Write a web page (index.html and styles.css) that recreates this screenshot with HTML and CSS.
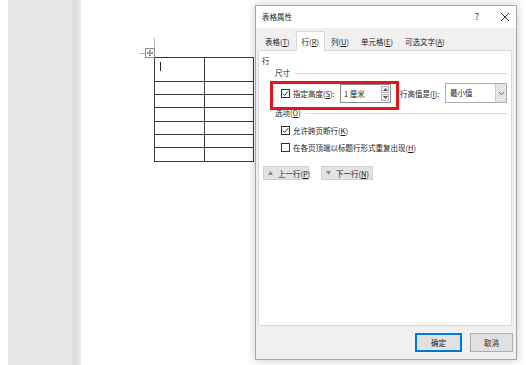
FILE: index.html
```html
<!DOCTYPE html>
<html lang="zh-CN">
<head>
<meta charset="utf-8">
<title>表格属性</title>
<link rel="stylesheet" href="styles.css">
</head>
<body>
<div class="screen">
  <div class="edge"></div>
  <div class="gutter"></div>
  <div class="gutter-shade"></div>
  <div class="page">
    <div class="crop-v"></div>
    <div class="crop-h"></div>
    <div class="handle">
      <svg width="8" height="8" viewBox="0 0 8 8"><path d="M4 1.2V6.8M1.2 4H6.8" stroke="#555" stroke-width="0.8" fill="none"/><path d="M4 0.8L3 2H5Z M4 7.2L3 6H5Z M0.8 4L2 3V5Z M7.2 4L6 3V5Z" fill="#555"/></svg>
    </div>
    <table class="doc-table">
      <tr class="r1"><td><span class="caret"></span></td><td></td></tr>
      <tr class="r2"><td></td><td></td></tr>
      <tr class="r2"><td></td><td></td></tr>
      <tr class="r3"><td></td><td></td></tr>
      <tr class="r2"><td></td><td></td></tr>
      <tr class="r2"><td></td><td></td></tr>
      <tr class="r3"><td></td><td></td></tr>
    </table>
  </div>
</div>

<div class="dialog">
  <div class="titlebar">
    <span class="title">表格属性</span>
    <span class="help">?</span>
    <span class="close"><svg width="10" height="10" viewBox="0 0 10 10"><path d="M1 1L9 9M9 1L1 9" stroke="#333" stroke-width="1" fill="none"/></svg></span>
  </div>
  <div class="tabs">
    <div class="tab">表格(<u>T</u>)</div>
    <div class="tab active">行(<u>R</u>)</div>
    <div class="tab">列(<u>U</u>)</div>
    <div class="tab">单元格(<u>E</u>)</div>
    <div class="tab">可选文字(<u>A</u>)</div>
  </div>
  <div class="panel">
    <div class="section-title">行</div>
    <div class="group-head"><span>尺寸</span><i class="rule"></i></div>
    <div class="size-row">
      <span class="check"><svg width="7" height="7" viewBox="0 0 7 7"><path d="M0.8 3.6L2.6 5.4L6.2 1.2" stroke="#222" stroke-width="0.9" fill="none"/></svg></span>
      <span class="lbl">指定高度(<u>S</u>):</span>
      <div class="spin">
        <span class="spin-val">1 厘米</span>
        <div class="spin-btns">
          <span class="spin-btn"><svg width="5" height="3" viewBox="0 0 5 3"><path d="M2.5 0L5 3H0Z" fill="#555"/></svg></span>
          <span class="spin-btn"><svg width="5" height="3" viewBox="0 0 5 3"><path d="M0 0H5L2.5 3Z" fill="#555"/></svg></span>
        </div>
      </div>
      <span class="lbl2">行高值是(<u>I</u>):</span>
      <div class="select">
        <span class="select-val">最小值</span>
        <span class="drop"><svg width="7" height="5" viewBox="0 0 7 5"><path d="M1 1.2L3.5 3.6L6 1.2" stroke="#555" stroke-width="0.9" fill="none"/></svg></span>
      </div>
    </div>
    <div class="group-head group-gap"><span>选项(<u>O</u>)</span><i class="rule"></i></div>
    <div class="opt-row">
      <span class="check"><svg width="7" height="7" viewBox="0 0 7 7"><path d="M0.8 3.6L2.6 5.4L6.2 1.2" stroke="#222" stroke-width="0.9" fill="none"/></svg></span>
      <span class="opt-text">允许跨页断行(<u>K</u>)</span>
    </div>
    <div class="opt-row second">
      <span class="check"></span>
      <span class="opt-text">在各页顶端以标题行形式重复出现(<u>H</u>)</span>
    </div>
    <div class="nav-row">
      <button class="nav-btn prev"><svg class="arrow" width="5" height="4" viewBox="0 0 5 4"><path d="M2.5 0L5 4H0Z" fill="#8a8a8a"/></svg>上一行(<u>P</u>)</button>
      <button class="nav-btn next"><svg class="arrow" width="5" height="4" viewBox="0 0 5 4"><path d="M0 0H5L2.5 4Z" fill="#8a8a8a"/></svg>下一行(<u>N</u>)</button>
    </div>
    <div class="highlight"></div>
  </div>
  <div class="footer">
    <button class="btn ok">确定</button>
    <button class="btn cancel">取消</button>
  </div>
</div>
</body>
</html>
```

FILE: styles.css
```css
html, body {
  margin: 0;
  padding: 0;
}
body {
  width: 527px;
  height: 365px;
  overflow: hidden;
  position: relative;
  background: #fff;
  font-family: "Noto Sans CJK SC", "Noto Sans", sans-serif;
}
u {
  text-decoration: underline;
  text-underline-offset: 1px;
  text-decoration-thickness: 0.5px;
}

/* ---------- document background ---------- */
.screen {
  display: flex;
  height: 365px;
}
.edge {
  width: 8px;
  background: #fff;
}
.gutter {
  width: 64px;
  background: #e6e6e6;
}
.gutter-shade {
  width: 9px;
  background: linear-gradient(to right, #dcdcdc, #e0e0e0 60%, #f0f0f0);
}
.page {
  flex: 1;
  position: relative;
  background: #fff;
  padding: 57px 0 0 73px;
}
.crop-v {
  position: absolute;
  left: 73px;
  top: 38px;
  width: 1px;
  height: 15px;
  background: #b0b0b0;
}
.crop-h {
  position: absolute;
  left: 59px;
  top: 53px;
  width: 14px;
  height: 1px;
  background: #b0b0b0;
}
.handle {
  position: absolute;
  left: 64px;
  top: 48px;
  width: 8px;
  height: 8px;
  border: 1px solid #8c8c8c;
  background: #fff;
  display: flex;
}
.doc-table {
  border-collapse: collapse;
  width: 100px;
  table-layout: fixed;
}
.doc-table td {
  border: 1px solid #3a3a3a;
  padding: 0;
  vertical-align: top;
}
.doc-table .r1 { height: 24px; }
.doc-table .r2 { height: 13px; }
.doc-table .r3 { height: 14px; }
.caret {
  display: block;
  width: 1px;
  height: 9px;
  margin: 4px 0 0 5px;
  background: #222;
}

/* ---------- dialog ---------- */
.dialog {
  position: absolute;
  left: 255px;
  top: 5px;
  width: 262px;
  height: 355px;
  box-sizing: border-box;
  border: 1px solid #a6a6a6;
  background: #f0f0f0;
  box-shadow: 0 0 9px rgba(0, 0, 0, 0.22);
  display: flex;
  flex-direction: column;
  font-size: 7.5px;
  color: #1a1a1a;
}
.titlebar {
  height: 22px;
  background: #fff;
  display: flex;
  align-items: center;
  padding-left: 6px;
  line-height: 12px;
}
.title {
  flex: 1;
}
.help {
  width: 10px;
  text-align: center;
  font-size: 9px;
  color: #333;
  margin-right: 18px;
}
.close {
  width: 10px;
  height: 10px;
  display: flex;
  margin-right: 6px;
}
.tabs {
  height: 22px;
  display: flex;
  align-items: flex-end;
  padding-left: 3px;
}
.tab {
  height: 16px;
  line-height: 15px;
  padding: 0 6px;
  white-space: nowrap;
}
.tab.active {
  height: 19px;
  line-height: 19px;
  padding: 0 5px;
  background: #fff;
  border: 1px solid #d9d9d9;
  border-bottom: none;
  margin-bottom: -1px;
  position: relative;
  z-index: 1;
}
.panel {
  position: relative;
  height: 276px;
  margin: 0 4px 0 2px;
  box-sizing: border-box;
  background: #fff;
  border: 1px solid #d9d9d9;
  padding: 4px 3px 0 3px;
}
.section-title {
  line-height: 12px;
}
.group-head {
  display: flex;
  align-items: center;
  margin-left: 13px;
  line-height: 12px;
  white-space: nowrap;
}
.group-head.group-gap {
  margin-top: 4px;
}
.rule {
  flex: 1;
  height: 1px;
  background: #dcdcdc;
  margin-left: 4px;
}
.size-row {
  margin-top: 4px;
  height: 20px;
  display: flex;
  align-items: center;
  padding-left: 19px;
  white-space: nowrap;
}
.check {
  width: 9px;
  height: 9px;
  box-sizing: border-box;
  border: 1px solid #333;
  background: #fff;
  display: flex;
  align-items: center;
  justify-content: center;
  flex: none;
}
.lbl {
  margin-left: 3px;
  width: 45px;
}
.spin {
  margin-left: 2px;
  width: 51px;
  height: 19px;
  box-sizing: border-box;
  border: 1px solid #8a8a8a;
  background: #fff;
  display: flex;
  align-items: stretch;
}
.spin-val {
  flex: 1;
  padding-left: 3px;
  line-height: 17px;
}
.spin-btns {
  width: 8px;
  margin: 1px 1px 1px 0;
  display: flex;
  flex-direction: column;
  gap: 1px;
}
.spin-btn {
  flex: 1;
  border: 1px solid #b4b4b4;
  background: #f4f4f4;
  display: flex;
  align-items: center;
  justify-content: center;
}
.lbl2 {
  margin-left: 9px;
  width: 44px;
}
.select {
  margin-left: 1px;
  width: 62px;
  height: 20px;
  box-sizing: border-box;
  border: 1px solid #acacac;
  background: #fff;
  display: flex;
  align-items: stretch;
}
.select-val {
  flex: 1;
  padding-left: 4px;
  line-height: 18px;
}
.drop {
  width: 10px;
  background: #e5e5e5;
  border-left: 1px solid #c9c9c9;
  display: flex;
  align-items: center;
  justify-content: center;
}
.opt-row {
  margin-top: 4px;
  height: 14px;
  display: flex;
  align-items: center;
  padding-left: 19px;
  white-space: nowrap;
}
.opt-row.second {
  margin-top: 3px;
}
.opt-text {
  margin-left: 3px;
}
.nav-row {
  margin-top: 12px;
  display: flex;
  gap: 12px;
  padding-left: 1px;
}
.nav-btn {
  height: 14px;
  box-sizing: border-box;
  border: 1px solid #d0d0d0;
  background: #e3e3e3;
  font: inherit;
  color: #1a1a1a;
  padding: 0;
  display: flex;
  align-items: center;
  white-space: nowrap;
}
.nav-btn.prev { width: 46px; }
.nav-btn.next { width: 52px; }
.arrow {
  flex: none;
  margin: 0 5px 0 4px;
}
.highlight {
  position: absolute;
  left: 11px;
  top: 30px;
  width: 129px;
  height: 29px;
  box-sizing: border-box;
  border: 3px solid #e0161f;
}
.footer {
  flex: 1;
  display: flex;
  justify-content: flex-end;
  align-items: flex-start;
  gap: 8px;
  padding: 7px 3px 0 0;
}
.btn {
  height: 19px;
  box-sizing: border-box;
  border: 1px solid #adadad;
  background: #e1e1e1;
  font: inherit;
  color: #1a1a1a;
  padding: 0;
}
.btn.ok {
  width: 47px;
  border-color: #0078d7;
  box-shadow: inset 0 0 0 1px #0078d7;
}
.btn.cancel {
  width: 43px;
}
```
